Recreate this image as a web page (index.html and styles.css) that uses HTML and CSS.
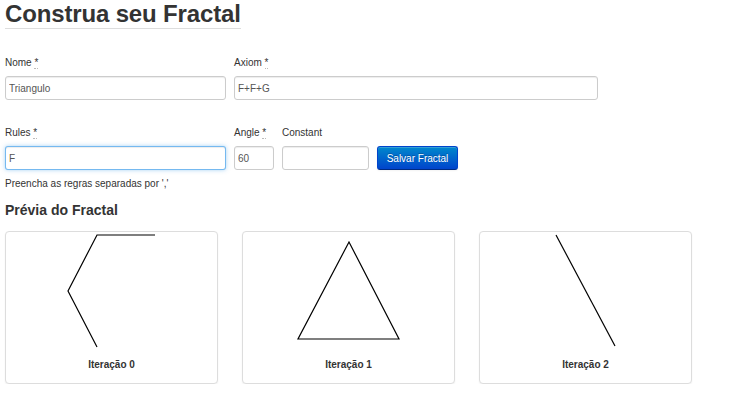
FILE: index.html
```html
<!DOCTYPE html>
<html lang="pt">
<head>
<meta charset="utf-8">
<title>Construa seu Fractal</title>
<link rel="stylesheet" href="styles.css">
</head>
<body>
<div class="page">
  <h1 class="title">Construa seu Fractal</h1>

  <div class="row row-first">
    <div class="field">
      <label class="lbl">Nome <abbr title="obrigatório">*</abbr></label>
      <input class="inp w-name" type="text" value="Triangulo">
    </div>
    <div class="field">
      <label class="lbl">Axiom <abbr title="obrigatório">*</abbr></label>
      <input class="inp w-axiom" type="text" value="F+F+G">
    </div>
  </div>

  <div class="row row-second">
    <div class="field">
      <label class="lbl">Rules <abbr title="obrigatório">*</abbr></label>
      <input class="inp w-name focus" type="text" value="F">
    </div>
    <div class="field">
      <label class="lbl">Angle <abbr title="obrigatório">*</abbr></label>
      <input class="inp w-angle" type="text" value="60">
    </div>
    <div class="field">
      <label class="lbl">Constant</label>
      <input class="inp w-const" type="text" value="">
    </div>
    <div class="field">
      <span class="lbl">&nbsp;</span>
      <button class="btn" type="button">Salvar Fractal</button>
    </div>
  </div>

  <p class="help">Preencha as regras separadas por ','</p>

  <h2 class="subtitle">Prévia do Fractal</h2>

  <div class="cards">
    <div class="card">
      <svg class="draw" width="211" height="126" viewBox="0 0 211 126">
        <polyline points="149,3 91,3 62,59 91,115" fill="none" stroke="#000" stroke-width="1.2"/>
      </svg>
      <div class="cap">Iteração 0</div>
    </div>
    <div class="card">
      <svg class="draw" width="211" height="126" viewBox="0 0 211 126">
        <polygon points="106,10 55,107 156,107" fill="none" stroke="#000" stroke-width="1.2"/>
      </svg>
      <div class="cap">Iteração 1</div>
    </div>
    <div class="card">
      <svg class="draw" width="211" height="126" viewBox="0 0 211 126">
        <line x1="76" y1="3" x2="135" y2="114" stroke="#000" stroke-width="1.2"/>
      </svg>
      <div class="cap">Iteração 2</div>
    </div>
  </div>
</div>
</body>
</html>
```

FILE: styles.css
```css
* { box-sizing: border-box; }

html, body {
  margin: 0;
  padding: 0;
  background: #fff;
}

body {
  font-family: "Liberation Sans", Arial, Helvetica, sans-serif;
  font-size: 10px;
  line-height: 14px;
  color: #333;
}

.page {
  padding: 0 5px;
}

.title {
  display: inline-block;
  margin: 0;
  font-size: 24px;
  line-height: 28px;
  letter-spacing: -0.15px;
  font-weight: bold;
  color: #333;
  border-bottom: 1px solid #ddd;
}

.row {
  display: flex;
  gap: 8px;
  align-items: flex-start;
}

.row-first {
  margin-top: 27px;
}

.row-second {
  margin-top: 26px;
}

.field {
  display: flex;
  flex-direction: column;
}

.lbl {
  display: block;
  height: 14px;
  line-height: 14px;
  margin-bottom: 6px;
  color: #333;
}

abbr {
  text-decoration: none;
  border-bottom: 1px dotted #bbb;
}

.inp {
  height: 24px;
  margin: 0;
  padding: 0 3px;
  font-family: "Liberation Sans", Arial, Helvetica, sans-serif;
  font-size: 10px;
  color: #555;
  background: #fff;
  border: 1px solid #ccc;
  border-radius: 3px;
  box-shadow: inset 0 1px 1px rgba(0, 0, 0, 0.075);
  outline: none;
}

.inp.focus {
  border-color: rgba(82, 168, 236, 0.8);
  box-shadow: inset 0 1px 1px rgba(0, 0, 0, 0.075), 0 0 4px rgba(82, 168, 236, 0.5);
}

.w-name { width: 221px; }
.w-axiom { width: 364px; }
.w-angle { width: 40px; }
.w-const { width: 87px; }

.btn {
  height: 24px;
  width: 81px;
  padding: 0;
  font-family: "Liberation Sans", Arial, Helvetica, sans-serif;
  font-size: 10px;
  color: #fff;
  text-shadow: 0 -1px 0 rgba(0, 0, 0, 0.25);
  background: linear-gradient(to bottom, #0088cc, #0044cc);
  border: 1px solid #0044cc;
  border-bottom-color: #002a80;
  border-radius: 3px;
  box-shadow: inset 0 1px 0 rgba(255, 255, 255, 0.2), 0 1px 2px rgba(0, 0, 0, 0.05);
}

.help {
  margin: 7px 0 0;
  line-height: 14px;
  color: #333;
}

.subtitle {
  margin: 10px 0 0;
  font-size: 14px;
  line-height: 18px;
  font-weight: bold;
  color: #333;
}

.cards {
  display: flex;
  gap: 24px;
  margin-top: 12px;
}

.card {
  width: 213px;
  height: 153px;
  border: 1px solid #ddd;
  border-radius: 4px;
  box-shadow: 0 1px 2px rgba(0, 0, 0, 0.06);
  background: #fff;
}

.draw {
  display: block;
}

.cap {
  text-align: center;
  font-size: 10px;
  line-height: 14px;
  font-weight: bold;
  color: #333;
}
```
